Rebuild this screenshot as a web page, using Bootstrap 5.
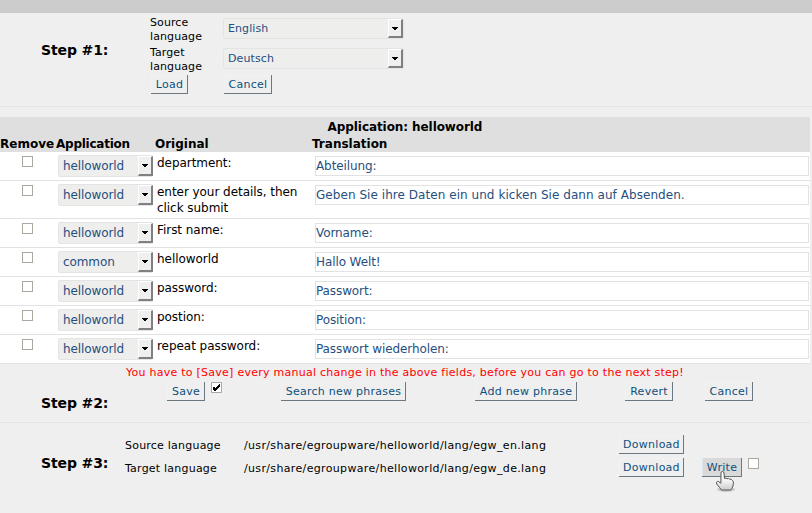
<!DOCTYPE html>
<html lang="en">
<head>
<meta charset="utf-8">
<meta name="viewport" content="width=device-width, initial-scale=1">
<title>Translation tools</title>
<link href="https://cdn.jsdelivr.net/npm/bootstrap@5.3.0/dist/css/bootstrap.min.css" rel="stylesheet">
<style>
body{background:#efefef;color:#000;font:11px/14px "DejaVu Sans",Verdana,sans-serif;letter-spacing:.22px;overflow:hidden}
.topbar{height:13px;background:#ccc}
.step{display:grid;border-bottom:1px solid #e4e4e4;width:810px}
.step-title{font-size:14px;font-weight:bold;line-height:18px;letter-spacing:-.12px;padding:28px 0 0 41px}
.step-two .step-title{padding-top:30px}
.step-three .step-title{padding-top:31px}
.step-one{height:94px;grid-template-columns:150px 1fr;width:812px}
.lang-form{display:grid;grid-template-columns:73px 181px;grid-template-rows:30px 30px 20px;padding-top:2px;letter-spacing:.1px}
.lang-form label{padding-top:1px}
.lang-form .pick{margin-top:3px}
.lang-form .tool{margin-left:1px}
.tool{height:19px;padding:1px 0 0 1px;border:solid #6b7880;border-width:0 1px 1px 0;border-radius:0;background:#efefef;color:#0d4f7d;font-size:11px;line-height:17px;letter-spacing:.26px;text-align:center;white-space:nowrap;box-shadow:inset 1px 1px #f0f3f5}
.tool.pressed{background:#d9d9d9;box-shadow:inset 1px 0 #dfeaf0}
.w-load{width:37px}.w-cancel{width:48px}.w-save{width:38px}.w-search{width:125px}.w-add{width:102px}.w-down{width:65px}.w-write{width:40px}
.pick{height:21px;border:1px solid #e4e4e4;border-radius:2px;background:#eeeeec;color:#264f80;padding-left:4px;display:flex;justify-content:space-between;align-items:center}
.pick .arrow{width:15px;height:19px;background:#efefef;border:solid;border-width:1px 2px 2px 1px;border-color:#fff #808080 #808080 #fff;display:flex;align-items:center;justify-content:center}
.pick svg{display:block;width:6px;height:3px}
.phrases{width:810px;margin:10px 0 0;table-layout:fixed;border-collapse:separate;border-spacing:0;background:#fff;font-size:12px;line-height:16px;letter-spacing:-.05px}
.phrases th{background:#dfdfdf;padding:0;line-height:16px;height:16px;white-space:nowrap;letter-spacing:0}
.phrases .app-head{letter-spacing:-.25px}
.phrases .caption-row th{height:19px;line-height:18px;padding-top:1px;text-align:center;letter-spacing:-.08px}
.phrases td{height:29px;padding:3px 0 0 2px;border-bottom:1px solid #e2e2e2;vertical-align:top}
.phrases .tall td{height:38px}
.phrases .pick{width:95px;height:22px;letter-spacing:-.1px}
.phrases .pick .arrow{height:20px;margin-right:-1px}
.tick{appearance:none;display:block;width:11px;height:11px;margin:0;border:1px solid #aaa99f;background:#fff}
.phrases .tick{margin:1px 0 0 20px}
.phrase{display:block;width:494px;height:20px;border:1px solid #e2e2e2;border-radius:0;padding:0;color:#264f80;font-size:12px;line-height:18px;background:#fff;margin:1px 0 0 1px;letter-spacing:-.1px}
.tall .phrase{letter-spacing:.05px}
.step-two{height:59px;grid-template-columns:125px 1fr}
.notice{color:#f00;padding:2px 0 3px 1px;letter-spacing:.255px;line-height:13px}
.save-line{padding-left:42px}
.save-line .checked{margin:0 59px 0 6px}
.save-line .w-add{margin:0 48px 0 69px}
.save-line .w-cancel:last-child{margin-left:32px}
.step-three{height:80px;grid-template-columns:125px 1fr;border:0}
.files{display:grid;grid-template-columns:119px 375px 83px 46px 20px;grid-template-rows:23px 23px;padding-top:12px}
.file-path{letter-spacing:.345px}
.hand{position:absolute;left:13px;top:12px;width:21px;height:23px;pointer-events:none}
</style>
<script src="https://cdn.jsdelivr.net/npm/bootstrap@5.3.0/dist/js/bootstrap.bundle.min.js"></script>
</head>
<body>
<svg class="d-none"><symbol id="down" viewBox="0 0 6 3"><path d="M0 0h6v1H5v1H4v1H2V2H1V1H0z"/></symbol></svg>
<header class="topbar"></header>
<section class="step step-one">
  <div class="step-title">Step #1:</div>
  <div class="lang-form">
    <label>Source<br>language</label><div class="pick"><span>English</span><span class="arrow"><svg><use href="#down"/></svg></span></div>
    <label>Target<br>language</label><div class="pick"><span>Deutsch</span><span class="arrow"><svg><use href="#down"/></svg></span></div>
    <div><button class="btn tool w-load">Load</button></div><div><button class="btn tool w-cancel">Cancel</button></div>
  </div>
</section>
<table class="phrases">
<colgroup><col style="width:56px"><col style="width:99px"><col style="width:157px"><col></colgroup>
<thead><tr class="caption-row"><th colspan="4">Application: helloworld</th></tr>
<tr><th>Remove</th><th class="app-head">Application</th><th>Original</th><th>Translation</th></tr></thead>
<tbody id="rows"></tbody>
</table>
<section class="step step-two">
  <div class="step-title">Step #2:</div>
  <div>
    <div class="notice">You have to [Save] every manual change in the above fields, before you can go to the next step!</div>
    <div class="d-flex save-line">
      <button class="btn tool w-save">Save</button>
      <svg class="checked" width="11" height="11" viewBox="0 0 11 11"><path fill="#fff" stroke="#aaa99f" d="M.5.5h10v10H.5z"/><path fill="#000" d="M2 5h2v1h1V5h1V4h1V3h1V2h1v3H8v1H7v1H6v1H5v1H3V8H2z"/></svg>
      <button class="btn tool w-search">Search new phrases</button>
      <button class="btn tool w-add">Add new phrase</button>
      <button class="btn tool w-cancel">Revert</button>
      <button class="btn tool w-cancel">Cancel</button>
    </div>
  </div>
</section>
<section class="step step-three">
  <div class="step-title">Step #3:</div>
  <div class="files">
    <span class="pt-1">Source language</span><span class="pt-1 file-path">/usr/share/egroupware/helloworld/lang/egw_en.lang</span><button class="btn tool w-down">Download</button><i></i><i></i>
    <span class="pt-1">Target language</span><span class="pt-1 file-path">/usr/share/egroupware/helloworld/lang/egw_de.lang</span><button class="btn tool w-down">Download</button>
    <div class="position-relative"><button class="btn tool pressed w-write">Write</button>
      <svg class="hand" viewBox="0 0 21 23"><defs><linearGradient id="g" x2="0" y2="1"><stop stop-color="#fff"/><stop offset=".5" stop-color="#f4f4f4"/><stop offset="1" stop-color="#ccc"/></linearGradient></defs><ellipse cx="11" cy="19.5" rx="9" ry="2.5" fill="#000" opacity=".15"/><path d="M7.500 1.500q1.300 0 1.500 1.500l.5 5.500q1.500-1 2.600.2 1.500-.8 2.500.5 1.800-.5 2.500 1 1.500.7 1.300 3-.1 3-1.500 5.300l-1 1.500H6.500l-2-2.500-2.800-3.500q-1-2 .8-2.600 1.300-.2 2.500 1.300l.9.500L6 3q0-1.500 1.500-1.500z" fill="url(#g)" stroke="#555"/></svg>
    </div><input type="checkbox" class="tick">
  </div>
</section>
<script>
const phrases=[["helloworld","department:","Abteilung:"],["helloworld","enter your details, then<br>click submit","Geben Sie ihre Daten ein und kicken Sie dann auf Absenden."],["helloworld","First name:","Vorname:"],["common","helloworld","Hallo Welt!"],["helloworld","password:","Passwort:"],["helloworld","postion:","Position:"],["helloworld","repeat password:","Passwort wiederholen:"]];
document.getElementById("rows").innerHTML=phrases.map(([app,original,translation])=>`<tr class="${original.includes("<br>")?"tall":""}"><td><input type="checkbox" class="tick"></td><td><div class="pick"><span>${app}</span><span class="arrow"><svg><use href="#down"/></svg></span></div></td><td>${original}</td><td><input class="phrase" value="${translation}"></td></tr>`).join("");
</script>
</body>
</html>
